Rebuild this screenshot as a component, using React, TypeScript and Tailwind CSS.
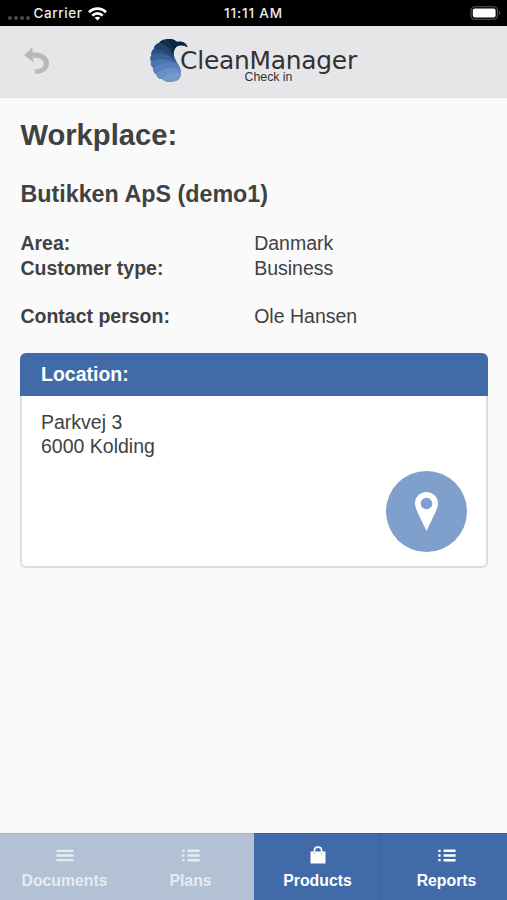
import React from "react";

function StatusBar() {
  return (
    <div className="grid h-[26px] grid-cols-3 items-center bg-black font-['Inter',sans-serif] text-[13.5px] font-medium text-[#eee]">
      <div className="flex items-center pt-px pl-2">
        <div className="mt-[9px] flex gap-[2.5px]">
          {[0, 1, 2, 3].map((i) => (
            <span key={i} className="size-[3.5px] rounded-full bg-[#484848]" />
          ))}
        </div>
        <span className="ml-[4px] tracking-[0.045em]">Carrier</span>
        <svg className="ml-[5px] h-[14px] w-[19px]" viewBox="0 0 19 14" fill="none" stroke="#fff" strokeWidth="2.7">
          <path d="M1 5.3C5.8.4 13.2.4 18 5.3" />
          <path d="M4.3 8.6c3-2.9 7.4-2.9 10.4 0" />
          <path d="M9.5 13.6 6.7 10.8c1.6-1.5 4-1.5 5.6 0z" fill="#fff" stroke="none" />
        </svg>
      </div>
      <span className="text-center tracking-[0.065em]">11:11 AM</span>
      <svg className="mr-[6px] h-[14px] w-[31px] justify-self-end" viewBox="0 0 31 14">
        <rect x="1" y=".7" width="26.5" height="12.6" rx="3.7" fill="none" stroke="#5a5a5a" strokeWidth="1.1" />
        <rect x="2.8" y="2.4" width="22.8" height="9.2" rx="2" fill="#fff" />
        <path d="M29 5c1.6.5 1.6 3.5 0 4z" fill="#5a5a5a" />
      </svg>
    </div>
  );
}

function Logo() {
  return (
    <svg className="h-[46px] w-[40px] shrink-0" viewBox="0 0 40 46">
      <path d="M16 2C12 2 10 3 9 5 6 6 4 8 4 11 2 12 1 14 1.5 17 0 19 0 21 1 23 0 26 1 28 3 30 3 33 4 35 6 36 7 39 9 41 12 41 15 44 20 45 24 43 28 43 30 40 31 36 31 31 29 27 26 23 23 19 22 14 25 10 28 7 33 7 37.5 9 36 4 31 3 27 4 24 1 20 0 16 2z" fill="#4d75b1" />
      <path d="M3 30c6-5 15-6 24-5 3 3 4 7 4 11-2 7-9 8-15 6l-4-1c-3 0-5-2-6-5-2-1-3-3-3-6z" fill="#587fb9" />
      <path d="M6 36c6-6 16-8 24-4 2 3 1 8-2 10-5 3-12 2-16-1-3 0-5-2-6-5z" fill="#6b90c6" />
      <path d="M12 41c4-6 12-8 19-5-1 4-3 7-7 7-4 2-9 1-12-2z" fill="#7698ca" />
      <path d="M1 23c8-3 17-2 26 2l-3-7C17 12 8 12 1.5 17 0 19 0 21 1 23z" fill="#3b629a" />
      <path d="M1.5 17C9 14 18 16 25 22c-3-6-9-14-16-17-3 1-5 3-5 6-2 1-3 3-2.5 6z" fill="#2c5081" />
      <path d="M4 11c8 0 15 4 20 9l-1-7C20 7 16 3 9 5 6 6 4 8 4 11z" fill="#21446d" />
      <path d="M9 5c7 1 12 6 15 14-1-7 2-12 7-12 2 0 4 1 6.5 2C36 4 31 3 27 4 22 0 12 0 9 5z" fill="#102e4d" />
      <path d="M16 2c4 2 7 6 7 11 2-6 8-7 14.5-4C36 4 31 3 27 4c-3-3-7-4-11-2z" fill="#0b2440" />
    </svg>
  );
}

function Header() {
  return (
    <header className="grid h-[72px] grid-cols-[150px_1fr] border-b border-[#dcdde0] bg-[#e6e6e8]">
      <svg className="mt-[21px] ml-[24px] h-[28px] w-[26px]" viewBox="0 0 26 28">
        <path d="M.2 8.2 8.2.2l.6 5C18.5 5.3 25 9.5 25 16.2c0 6.4-5.4 10.5-13.6 10.6l-.9-4.3c6-.2 9.2-2.3 9.2-6 0-3.8-4.1-6-10.5-6.1l.5 5z" fill="#b9b9bb" />
      </svg>
      <div className="flex pt-[12px]">
        <Logo />
        <div className="-ml-[13px] flex w-[183px] flex-col items-center pt-[9px] text-[#303133]">
          <div className="font-['DejaVu_Sans',sans-serif] text-[24.9px] leading-[27px] tracking-[-0.01em] whitespace-nowrap">CleanManager</div>
          <div className="-mt-[3px] text-[12.3px] leading-[13px]">Check in</div>
        </div>
      </div>
    </header>
  );
}

function Field({ label, value }: { label: string; value: string }) {
  return (
    <div className="grid grid-cols-2">
      <dt className="font-bold">{label}</dt>
      <dd>{value}</dd>
    </div>
  );
}

function MenuIcon({ list = false }: { list?: boolean }) {
  return (
    <svg className="h-[13px] w-[18px]" viewBox="0 0 18 13" fill="none" stroke="currentColor" strokeWidth="2.3">
      {list ? (
        <>
          <path d="M.3 1.8h2.3M.3 6.5h2.3M.3 11.2h2.3" />
          <path d="M5.6 1.8h12M5.6 6.5h12M5.6 11.2h12" strokeWidth="2.5" />
        </>
      ) : (
        <path d="M.5 1.8h17M.5 6.5h17M.5 11.2h17" />
      )}
    </svg>
  );
}

function BagIcon() {
  return (
    <svg className="h-[18px] w-[16px]" viewBox="0 0 16 18">
      <path d="M4.4 7V4.6C4.4-.1 11.6-.1 11.6 4.6V7" fill="none" stroke="currentColor" strokeWidth="1.6" />
      <path d="M.5 5.5h15v12H.5z" fill="currentColor" />
      <path d="M3.8 7.3h1.3M10.9 7.3h1.3" stroke="#416ba8" strokeWidth=".7" />
    </svg>
  );
}

function Tab({ label, icon, className }: { label: string; icon: React.ReactNode; className: string }) {
  return (
    <div className={"flex flex-col items-center border-t pt-[11px] text-[15.8px] leading-[20px] font-bold " + className}>
      <div className="flex h-[20px] items-center justify-center">{icon}</div>
      <span className="mt-[6px]">{label}</span>
    </div>
  );
}

export default function App() {
  return (
    <div className="flex h-[900px] w-[507px] flex-col overflow-hidden bg-[#fafafa] font-['Liberation_Sans',Arial,sans-serif] text-[#404242]">
      <StatusBar />
      <Header />
      <main className="flex-1 pt-[19px] pr-[19px] pl-5">
        <div className="pl-[0.4px]">
          <h1 className="text-[29.2px] leading-[36px] font-bold">Workplace:</h1>
          <h2 className="mt-[26px] text-[23.3px] leading-[30px] font-bold">Butikken ApS (demo1)</h2>
          <dl className="mt-[22px] text-[19.5px] leading-[24.5px]">
            <Field label="Area:" value="Danmark" />
            <Field label="Customer type:" value="Business" />
            <div className="mt-[24.3px]">
              <Field label="Contact person:" value="Ole Hansen" />
            </div>
          </dl>
        </div>
        <section className="mt-[24px] flex h-[215px] flex-col text-[19.5px] leading-[24.4px]">
          <h3 className="h-[43px] rounded-t-[6px] bg-[#416ba8] pt-[9px] pl-[21px] font-bold text-white">Location:</h3>
          <div className="flex flex-1 flex-col rounded-b-[6px] border-2 border-t-0 border-[#dedede] bg-white pt-[14px] pl-[19px]">
            <p>Parkvej 3</p>
            <p>6000 Kolding</p>
            <div className="mt-auto mr-[19px] mb-[14px] flex size-[81px] items-center justify-center self-end rounded-full bg-[#7f9fcd]">
              <svg className="h-[39px] w-[23px]" viewBox="0 0 23 39">
                <path fillRule="evenodd" d="M11.5 0C5 0 0 5 0 11.3c0 3 1.3 6 2.4 8.6L11.5 39l9.1-19.1c1.1-2.6 2.4-5.6 2.4-8.6C23 5 18 0 11.5 0zm0 5.7a5.8 5.8 0 1 1 0 11.6 5.8 5.8 0 0 1 0-11.6z" fill="#fff" />
              </svg>
            </div>
          </div>
        </section>
      </main>
      <nav className="grid h-[67px] grid-cols-[127px_127px_127px_126px]">
        <Tab label="Documents" icon={<MenuIcon />} className="border-[#9fb3d0] bg-[#b4c0d4] pl-[2px] text-[#e6ebf2]" />
        <Tab label="Plans" icon={<MenuIcon list />} className="border-[#9fb3d0] bg-[#b4c0d4] text-[#e6ebf2]" />
        <Tab label="Products" icon={<BagIcon />} className="border-r border-[#365f9d] bg-[#416ba8] pl-[1px] text-white" />
        <Tab label="Reports" icon={<MenuIcon list />} className="border-[#365f9d] bg-[#416ba8] pl-[5px] text-white" />
      </nav>
    </div>
  );
}
